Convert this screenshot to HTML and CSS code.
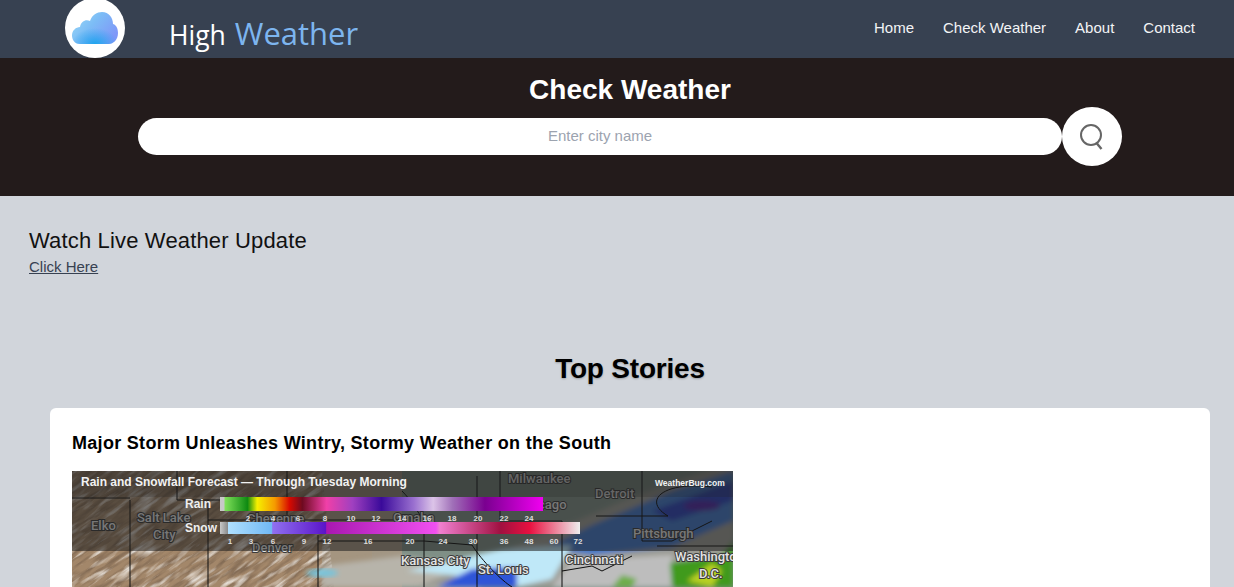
FILE: index.html

```html
<!DOCTYPE html>
<html lang="en">
<head>
<meta charset="UTF-8">
<meta name="viewport" content="width=device-width, initial-scale=1.0">
<title>High Weather</title>
<link rel="stylesheet" href="styles.css">
</head>
<body>
<header class="topbar">
    <div class="brand">
        <div class="logo">
            <svg width="60" height="60" viewBox="0 0 60 60">
                <defs>
                    <linearGradient id="cloudFill" x1="0" y1="0" x2="1" y2="0.6">
                        <stop offset="0" stop-color="#9bdcf6"/>
                        <stop offset="0.5" stop-color="#7cbcf6"/>
                        <stop offset="1" stop-color="#7f98f8"/>
                    </linearGradient>
                    <radialGradient id="cloudGlow" cx="0.5" cy="1" r="0.5">
                        <stop offset="0" stop-color="#1ea5ee"/>
                        <stop offset="1" stop-color="#1ea5ee" stop-opacity="0"/>
                    </radialGradient>
                </defs>
                <path d="M15 46 C9 46 7 41 7 37.5 C7 32.5 11 29 15 29 C16 23 21 21 25 23 C27 17 32 14 37 14 C44 14 48 20 48 26 C52 27 53 32 53 35 C53 42 48 46 44 46 Z" fill="url(#cloudFill)"/>
                <path d="M15 46 C9 46 7 41 7 37.5 C7 32.5 11 29 15 29 C16 23 21 21 25 23 C27 17 32 14 37 14 C44 14 48 20 48 26 C52 27 53 32 53 35 C53 42 48 46 44 46 Z" fill="url(#cloudGlow)"/>
            </svg>
        </div>
        <div class="brand-name">High <span class="brand-accent">Weather</span></div>
    </div>
    <nav class="nav">
        <a href="#">Home</a>
        <a href="#">Check Weather</a>
        <a href="#">About</a>
        <a href="#">Contact</a>
    </nav>
</header>

<section class="hero">
    <h2>Check Weather</h2>
    <form class="search">
        <input type="text" placeholder="Enter city name">
        <button type="button" aria-label="Search">
            <svg width="26" height="26" viewBox="0 0 26 26" fill="none" stroke="#666" stroke-width="2">
                <circle cx="12" cy="11" r="10"/>
                <path d="M17.5 19 L22.5 25" stroke-width="2.4"/>
            </svg>
        </button>
    </form>
</section>

<section class="live">
    <h3>Watch Live Weather Update</h3>
    <a href="#">Click Here</a>
</section>

<h2 class="stories-title">Top Stories</h2>

<article class="story">
    <h4>Major Storm Unleashes Wintry, Stormy Weather on the South</h4>
    <svg class="map" width="661" height="116" viewBox="0 0 661 116" role="img" aria-label="Rain and snowfall forecast map">
        <defs>
            <filter id="rock" x="0" y="0" width="100%" height="100%">
                <feTurbulence type="fractalNoise" baseFrequency="0.035 0.2" numOctaves="3" seed="4"/>
                <feColorMatrix type="matrix" values="0 0 0 0 0.92  0 0 0 0 0.9  0 0 0 0 0.87  3 0 0 0 -1.45"/>
            </filter>
            <filter id="rockDark" x="0" y="0" width="100%" height="100%">
                <feTurbulence type="fractalNoise" baseFrequency="0.04 0.25" numOctaves="3" seed="9"/>
                <feColorMatrix type="matrix" values="0 0 0 0 0.2  0 0 0 0 0.13  0 0 0 0 0.08  3 0 0 0 -1.2"/>
            </filter>
            <filter id="soft" x="-10%" y="-10%" width="120%" height="120%">
                <feGaussianBlur stdDeviation="2.5"/>
            </filter>
            <clipPath id="westClip">
                <path d="M0 0 H250 L262 116 H0 Z"/>
            </clipPath>
            <linearGradient id="rainBar">
                <stop offset="0" stop-color="#c8c8c8"/>
                <stop offset="0.012" stop-color="#c8c8c8"/>
                <stop offset="0.016" stop-color="#7fe05a"/>
                <stop offset="0.085" stop-color="#0e8a12"/>
                <stop offset="0.115" stop-color="#f6f000"/>
                <stop offset="0.17" stop-color="#f59a00"/>
                <stop offset="0.215" stop-color="#d80a00"/>
                <stop offset="0.255" stop-color="#6e0a20"/>
                <stop offset="0.33" stop-color="#f040a8"/>
                <stop offset="0.41" stop-color="#a040c0"/>
                <stop offset="0.5" stop-color="#3a0a9a"/>
                <stop offset="0.6" stop-color="#9a70d0"/>
                <stop offset="0.66" stop-color="#dcc4e8"/>
                <stop offset="0.72" stop-color="#a070b8"/>
                <stop offset="0.82" stop-color="#7a0090"/>
                <stop offset="1" stop-color="#f000f0"/>
            </linearGradient>
            <linearGradient id="snowBar">
                <stop offset="0" stop-color="#c8c8c8"/>
                <stop offset="0.022" stop-color="#8a8a8a"/>
                <stop offset="0.023" stop-color="#b0e0ff"/>
                <stop offset="0.145" stop-color="#70b8f4"/>
                <stop offset="0.146" stop-color="#9070f0"/>
                <stop offset="0.295" stop-color="#5a14c8"/>
                <stop offset="0.296" stop-color="#a818b0"/>
                <stop offset="0.6" stop-color="#f050f0"/>
                <stop offset="0.61" stop-color="#f080d0"/>
                <stop offset="0.78" stop-color="#a01040"/>
                <stop offset="0.86" stop-color="#e81040"/>
                <stop offset="1" stop-color="#eeeeee"/>
            </linearGradient>
        </defs>

        <!-- terrain -->
        <rect width="661" height="116" fill="#9a8c78"/>
        <rect width="300" height="116" fill="#a3876a"/>
        <rect x="250" width="150" height="116" fill="#a49a88" opacity="0.75"/>
        <rect x="330" width="331" height="116" fill="#7f8f86"/>
        <g clip-path="url(#westClip)">
            <rect x="-200" y="-300" width="800" height="700" transform="rotate(-35 130 58)" filter="url(#rockDark)" opacity="0.75"/>
            <rect x="-200" y="-300" width="800" height="700" transform="rotate(-35 130 58)" filter="url(#rock)" opacity="0.8"/>
        </g>
        <path d="M250 116 L250 95 L330 85 L400 95 L410 116 Z" fill="#b7b4aa" filter="url(#soft)"/>
        <ellipse cx="250" cy="102" rx="16" ry="4" fill="#77c4dc" filter="url(#soft)"/>

        <!-- precipitation -->
        <g filter="url(#soft)">
            <path d="M345 116 L400 92 L480 60 L560 26 L661 -10 L661 116 Z" fill="#9c9c94"/>
            <path d="M430 84 L460 84 L520 54 L600 20 L661 0 L661 50 L600 76 L520 84 L490 80 Z" fill="#3f77c8"/>
            <path d="M335 100 L430 78 L500 74 L480 108 L445 116 L380 104 Z" fill="#bfe8f8"/>
            <path d="M365 116 L400 98 L445 96 L445 116 Z" fill="#2f55d8"/>
            <path d="M480 116 L500 90 L600 84 L600 116 Z" fill="#bdbdbd"/>
            <path d="M540 116 L550 104 L565 108 L560 116 Z" fill="#6fae4a"/>
            <path d="M598 92 L650 84 L661 70 L661 116 L600 116 Z" fill="#3f9a1e"/>
            <path d="M615 110 L640 92 L650 100 L640 116 Z" fill="#b8d020"/>
            <path d="M580 40 L661 10 L661 30 L600 50 Z" fill="#2a3fb8"/>
            <ellipse cx="630" cy="35" rx="18" ry="5" fill="#5020a0"/>
        </g>

        <!-- state lines -->
        <g fill="none" stroke="#0c0c0c" stroke-width="1">
            <path d="M0 27 H58 M58 29 V116 M105 0 V29 H215 M136 29 V116 M215 0 V49 H136 M246 64 V116 M246 70 H352 M215 49 H330"/>
            <path d="M330 20 C340 30 345 40 352 50 V116 M352 70 L400 74 C410 90 430 110 440 116"/>
            <path d="M428 0 V50 H490 V116 M405 5 V116 M490 100 L520 95 L530 100 L560 85 M570 0 V70 H600 L640 50"/>
            <path d="M524 45 H596 C570 30 590 10 640 16 M585 75 H661"/>
        </g>

        <!-- city labels -->
        <g class="city">
            <text x="19" y="59">Elko</text>
            <text x="65" y="51">Salt Lake</text>
            <text x="81" y="68">City</text>
            <text x="175" y="52">Cheyenne</text>
            <text x="180" y="81">Denver</text>
            <text x="321" y="51">Omaha</text>
            <text x="329" y="94">Kansas City</text>
            <text x="406" y="103">St. Louis</text>
            <text x="436" y="12">Milwaukee</text>
            <text x="447" y="38">Chicago</text>
            <text x="523" y="27">Detroit</text>
            <text x="561" y="67">Pittsburgh</text>
            <text x="493" y="93">Cincinnati</text>
            <text x="603" y="90">Washington</text>
            <text x="627" y="107">D.C.</text>
        </g>

        <!-- legend band -->
        <rect width="661" height="80" fill="#1e1e1e" opacity="0.55"/>
        <rect width="661" height="26" fill="#1e1e1e" opacity="0.2"/>
        <rect x="148" y="26" width="323" height="14" fill="url(#rainBar)"/>
        <rect x="148" y="51" width="360" height="12" fill="url(#snowBar)"/>
        <text class="map-title" x="9" y="15">Rain and Snowfall Forecast — Through Tuesday Morning</text>
        <text class="map-brand" x="583" y="15">WeatherBug.com</text>
        <text class="legend-label" x="113" y="37">Rain</text>
        <text class="legend-label" x="113" y="61">Snow</text>
        <g class="legend-num">
            <text x="176" y="50">2</text><text x="201" y="50">4</text><text x="226" y="50">6</text><text x="253" y="50">8</text>
            <text x="279" y="50">10</text><text x="304" y="50">12</text><text x="330" y="50">14</text><text x="355" y="50">16</text>
            <text x="380" y="50">18</text><text x="406" y="50">20</text><text x="432" y="50">22</text><text x="457" y="50">24</text>
            <text x="158" y="73">1</text><text x="179" y="73">3</text><text x="201" y="73">6</text><text x="232" y="73">9</text>
            <text x="255" y="73">12</text><text x="296" y="73">16</text><text x="338" y="73">20</text><text x="371" y="73">24</text>
            <text x="401" y="73">30</text><text x="432" y="73">36</text><text x="457" y="73">48</text><text x="482" y="73">60</text><text x="506" y="73">72</text>
        </g>
    </svg>
</article>
</body>
</html>
```

FILE: styles.css

```css
html, body {
    height: 100%;
}

body {
    margin: 0;
    overflow: hidden;
    background-color: #d1d5db;
    color: #111;
    font-family: "Liberation Sans", Arial, sans-serif;
}

.topbar {
    display: flex;
    justify-content: space-between;
    align-items: center;
    height: 58px;
    padding: 0 39px 0 65px;
    background-color: #374151;
}

.brand {
    display: flex;
    align-items: center;
    gap: 45px;
}

.logo {
    width: 60px;
    height: 60px;
    border-radius: 50%;
    background-color: #fff;
    margin-top: -2px;
}

.brand-name {
    color: #fff;
    font-family: "Open Sans", sans-serif;
    font-size: 26.5px;
    margin-top: 7px;
    margin-left: -1px;
}

.brand-accent {
    margin-left: 2px;
    color: #7db5ef;
    font-size: 31px;
}

.nav {
    display: flex;
    gap: 29px;
    margin-top: -4px;
}

.nav a {
    color: #f3f4f6;
    font-size: 15px;
    text-decoration: none;
}

.hero {
    height: 138px;
    padding-left: 26px;
    box-sizing: border-box;
    background-color: #231b1b;
    text-align: center;
}

.hero h2 {
    margin: 0;
    padding-top: 15px;
    color: #fff;
    font-size: 28px;
    line-height: 34px;
}

.search {
    display: flex;
    justify-content: center;
    align-items: center;
}

.search input {
    width: 924px;
    height: 37px;
    padding: 0 16px 2px;
    box-sizing: border-box;
    border: 0;
    border-radius: 19px;
    background-color: #fff;
    font-family: "Liberation Sans", Arial, sans-serif;
    font-size: 15px;
    text-align: center;
}

.search input::placeholder {
    color: #9ca3af;
}

.search button {
    display: flex;
    justify-content: center;
    align-items: center;
    width: 60px;
    height: 59px;
    padding: 0;
    border: 0;
    border-radius: 50%;
    background-color: #fff;
}

.live {
    padding: 32px 29px 0;
}

.live h3 {
    margin: 0 0 4px;
    font-size: 22px;
    font-weight: 400;
    line-height: 26px;
    letter-spacing: 0.16px;
}

.live a {
    color: #374151;
    font-size: 15px;
}

.stories-title {
    margin: 76px 0 0;
    padding-left: 26px;
    color: #000;
    font-size: 28px;
    line-height: 34px;
    letter-spacing: -0.2px;
    text-align: center;
    text-shadow: 0 1px 2px rgba(0, 0, 0, 0.25);
}

.story {
    margin: 22px 24px 0 50px;
    padding: 24px 22px;
    background-color: #fff;
    border-radius: 6px;
}

.story h4 {
    margin: 0 0 17px;
    color: #000;
    font-size: 18px;
    line-height: 22px;
    letter-spacing: 0.3px;
}

.map {
    display: block;
}

.city text {
    fill: #e4e4e4;
    stroke: #3a3a3a;
    stroke-width: 2px;
    paint-order: stroke;
    font-family: Roboto, sans-serif;
    font-size: 13px;
    font-weight: 500;
}

.map-title {
    fill: #f2f2f2;
    font-size: 12px;
    font-weight: 700;
}

.map-brand {
    fill: #f2f2f2;
    font-size: 8.5px;
    font-weight: 700;
}

.legend-label {
    fill: #eee;
    font-size: 12px;
    font-weight: 700;
}

.legend-num text {
    fill: #ddd;
    font-size: 8px;
    font-weight: 700;
    text-anchor: middle;
}
```
